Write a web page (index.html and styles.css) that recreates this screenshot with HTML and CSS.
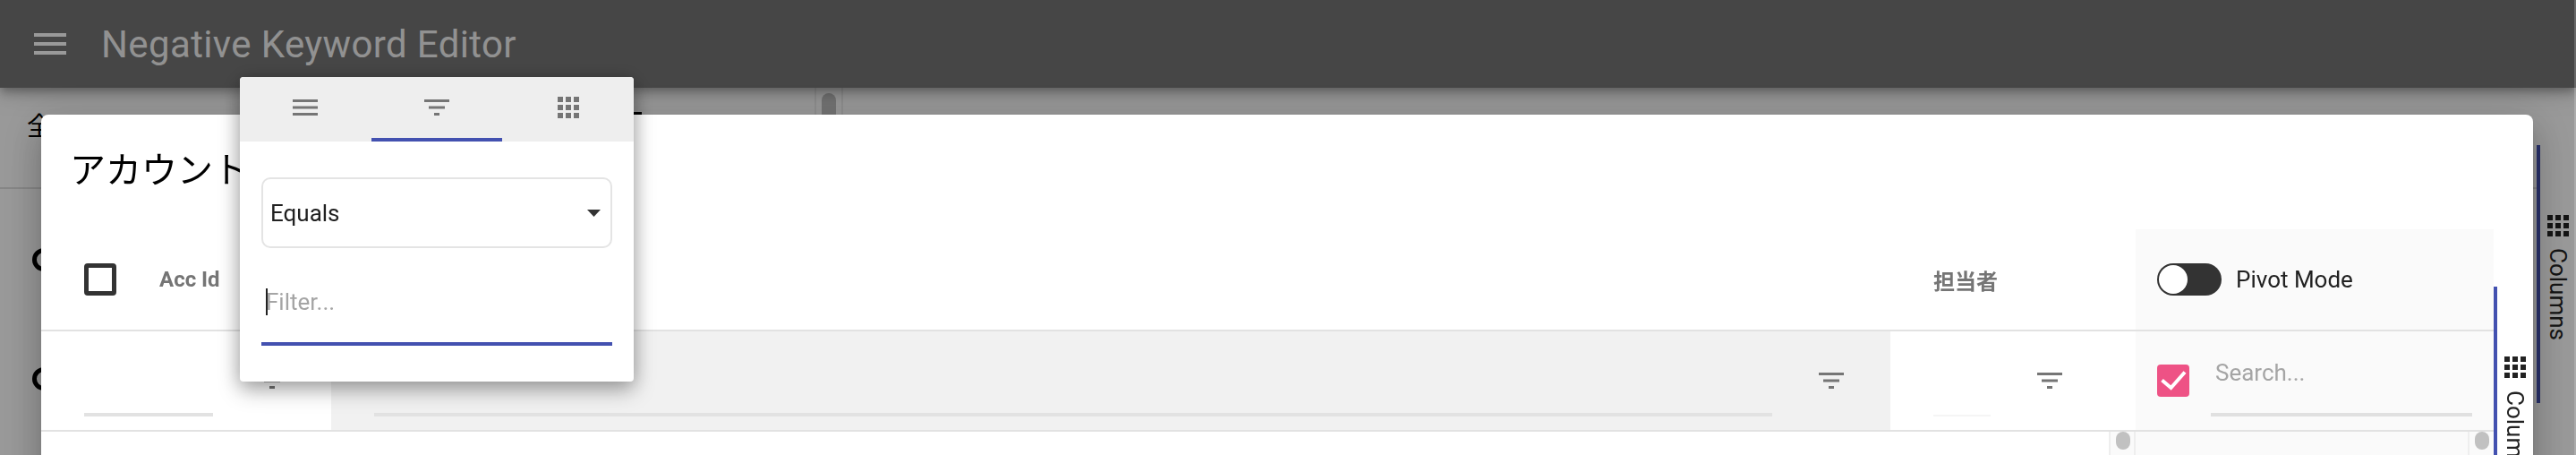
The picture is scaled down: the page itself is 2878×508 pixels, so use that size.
FILE: index.html
```html
<!DOCTYPE html>
<html lang="ja">
<head>
<meta charset="utf-8">
<title>Negative Keyword Editor</title>
<link rel="stylesheet" href="styles.css">
</head>
<body>
<div class="app">
  <header class="appbar">
    <svg class="icon-burger" viewBox="0 0 36 24"><path d="M0 0h36v4H0zM0 10h36v4H0zM0 20h36v4H0z"/></svg>
    <h1 class="app-title">Negative Keyword Editor</h1>
  </header>
  <div class="page">
    <main class="page-main">
      <div class="page-toolbar">
        <span class="page-label">全</span>
        <span class="page-peek"></span>
        <div class="page-scroller"><span class="page-thumb"></span></div>
      </div>
      <div class="page-row"><span class="page-radio"></span></div>
      <div class="page-row"><span class="page-radio"></span></div>
    </main>
    <aside class="side">
      <div class="side-tab side-tab-page">
        <svg class="icon-cols" viewBox="0 0 24 24"><path d="M0 0h6v6H0zM9 0h6v6H9zM18 0h6v6h-6zM0 9h6v6H0zM9 9h6v6H9zM18 9h6v6h-6zM0 18h6v6H0zM9 18h6v6H9zM18 18h6v6h-6z"/></svg>
        <span class="side-label">Columns</span>
      </div>
    </aside>
  </div>
</div>

<div class="backdrop"></div>
<div class="edge-strip"></div>

<section class="dialog">
  <h2 class="dialog-title">アカウント</h2>
  <div class="dialog-body">
    <div class="grid">
      <div class="row row-head">
        <div class="cell head-cell">
          <span class="check-empty"></span>
          <span class="col-name col-name-first">Acc Id</span>
        </div>
        <div class="cell"></div>
        <div class="cell head-cell"><span class="col-name">担当者</span></div>
        <div class="cell tool-cell head-tool">
          <span class="toggle"><span class="toggle-knob"></span></span>
          <span class="pivot-label">Pivot Mode</span>
        </div>
      </div>
      <div class="row row-filter">
        <div class="cell filter-cell">
          <span class="filter-input w-first"></span>
          <svg class="icon-filter" viewBox="0 0 28 18"><path d="M0 0h28v3H0zM5 7.500h18v3H5zM11 15h6v3h-6z"/></svg>
        </div>
        <div class="cell filter-cell cell-active">
          <span class="filter-input w-second"></span>
          <svg class="icon-filter" viewBox="0 0 28 18"><path d="M0 0h28v3H0zM5 7.500h18v3H5zM11 15h6v3h-6z"/></svg>
        </div>
        <div class="cell filter-cell">
          <span class="filter-input w-third"></span>
          <svg class="icon-filter" viewBox="0 0 28 18"><path d="M0 0h28v3H0zM5 7.500h18v3H5zM11 15h6v3h-6z"/></svg>
        </div>
        <div class="cell tool-cell filter-tool">
          <span class="check-on">
            <svg class="icon-check" viewBox="0 0 36 36"><path d="M5.500 17.500 15.500 26 31 8.500"/></svg>
          </span>
          <span class="search"><span class="search-text">Search...</span></span>
        </div>
      </div>
      <div class="row row-body">
        <div class="cell"></div>
        <div class="cell"></div>
        <div class="cell body-end"><div class="scroller"><span class="thumb"></span></div></div>
        <div class="cell tool-cell body-end"><div class="scroller scroller-tool"><span class="thumb"></span></div></div>
      </div>
    </div>
    <div class="dialog-side">
      <div class="side-tab side-tab-dialog">
        <svg class="icon-cols" viewBox="0 0 24 24"><path d="M0 0h6v6H0zM9 0h6v6H9zM18 0h6v6h-6zM0 9h6v6H0zM9 9h6v6H9zM18 9h6v6h-6zM0 18h6v6H0zM9 18h6v6H9zM18 18h6v6h-6z"/></svg>
        <span class="side-label">Columns</span>
      </div>
    </div>
  </div>
</section>

<div class="popup">
  <div class="tabs">
    <div class="tab">
      <svg class="icon-filter" viewBox="0 0 28 18"><path d="M0 0h28v3H0zM0 7.500h28v3H0zM0 15h28v3H0z"/></svg>
    </div>
    <div class="tab tab-active">
      <svg class="icon-filter" viewBox="0 0 28 18"><path d="M0 0h28v3H0zM5 7.500h18v3H5zM11 15h6v3h-6z"/></svg>
    </div>
    <div class="tab">
      <svg class="icon-tabcols" viewBox="0 0 24 24"><path d="M0 0h6v6H0zM9 0h6v6H9zM18 0h6v6h-6zM0 9h6v6H0zM9 9h6v6H9zM18 9h6v6h-6zM0 18h6v6H0zM9 18h6v6H9zM18 18h6v6h-6z"/></svg>
    </div>
  </div>
  <div class="popup-body">
    <div class="select">
      <span>Equals</span>
      <svg class="icon-caret" viewBox="0 0 15 8"><path d="M0 0h15L7.500 8z"/></svg>
    </div>
    <div class="popup-field">
      <span class="text-caret"></span>
      <span class="popup-placeholder">Filter...</span>
    </div>
  </div>
</div>
</body>
</html>
```
FILE: styles.css
```css
* { box-sizing: border-box; }
html, body { margin: 0; height: 508px; overflow: hidden; }
body {
  background: #fff;
  color: #000;
  font-family: Roboto, "Noto Sans CJK JP", sans-serif;
}

/* page behind the dialog */
.appbar {
  position: relative;
  z-index: 1;
  display: flex;
  align-items: center;
  height: 98px;
  padding-left: 38px;
  background: #757575;
  box-shadow: 0 4px 8px -2px rgba(0,0,0,.2), 0 8px 10px rgba(0,0,0,.14), 0 2px 30px rgba(0,0,0,.2);
}
.icon-burger { width: 36px; height: 24px; fill: #fff; }
.app-title {
  margin: 0 0 0 39px;
  font-size: 42px;
  font-weight: 400;
  letter-spacing: .37px;
  color: rgba(255,255,255,.92);
}
.page { display: flex; height: 410px; }
.page-main { flex: 1; }
.page-toolbar {
  display: flex;
  align-items: flex-start;
  height: 113px;
  padding-left: 30px;
  border-bottom: 2px solid #e0e0e0;
}
.page-label { margin-top: 24px; width: 30px; font-size: 28px; line-height: 40px; }
.page-peek { width: 9px; height: 4px; margin: 27px 0 0 648px; background: #000; }
.page-scroller {
  width: 32px;
  height: 60px;
  margin-left: 193px;
  padding: 6px 6px 0;
  border: solid #eee;
  border-width: 0 2px;
}
.page-thumb { display: block; height: 50px; border-radius: 8px; background: #c1c1c1; }
.page-row { display: flex; height: 133px; padding: 66px 0 0 36px; }
.page-radio { width: 26px; height: 26px; border: 5px solid #000; border-radius: 50%; }
.side { width: 44px; padding-top: 64px; }
.side-tab {
  display: flex;
  flex-direction: column;
  align-items: flex-start;
  border-left: 4px solid #4351b0;
  padding: 78px 0 0 8px;
}
.side-tab-page { height: 288px; }
.icon-cols { display: block; width: 24px; height: 24px; fill: #222; }
.side-label {
  margin-top: 13px;
  writing-mode: vertical-rl;
  font-size: 26px;
  line-height: 24px;
  color: #222;
}
.backdrop { position: fixed; inset: 0; z-index: 2; background: rgba(0,0,0,.4); }
.edge-strip {
  position: fixed;
  top: 0;
  right: 0;
  z-index: 2;
  width: 2px;
  height: 508px;
  background: rgba(255,255,255,.18);
}

/* dialog */
.dialog {
  position: fixed;
  top: 128px;
  left: 46px;
  z-index: 3;
  width: 2784px;
  height: 500px;
  border-radius: 8px;
  background: #fff;
  box-shadow: 0 11px 15px -7px rgba(0,0,0,.2), 0 24px 38px 3px rgba(0,0,0,.14), 0 9px 46px 8px rgba(0,0,0,.12);
}
.dialog-title {
  margin: 0;
  height: 128px;
  padding: 26px 0 0 32px;
  font-size: 40px;
  font-weight: 400;
  line-height: 66px;
  font-family: "Noto Sans CJK JP", sans-serif;
}
.dialog-body { display: flex; height: 372px; }
.grid { width: 2740px; }
.row {
  display: grid;
  grid-template-columns: 324px 1742px 274px 400px;
}
.row-head { height: 114px; border-bottom: 2px solid #e2e2e2; }
.row-filter { height: 112px; border-bottom: 2px solid #e2e2e2; }
.row-body { height: 146px; }
.cell { min-width: 0; }
.head-cell { display: flex; align-items: center; padding-left: 48px; }
.check-empty {
  width: 36px;
  height: 36px;
  border: 5px solid #333;
  border-radius: 4px;
}
.col-name { font-size: 24px; font-weight: 700; color: #757575; }
.col-name-first { margin-left: 48px; }
.tool-cell { background: #fafafa; }
.head-tool { display: flex; align-items: center; padding-left: 24px; }
.toggle {
  width: 72px;
  height: 36px;
  padding: 2px;
  border-radius: 18px;
  background: #333;
}
.toggle-knob { display: block; width: 32px; height: 32px; border-radius: 50%; background: #fff; }
.pivot-label { margin-left: 16px; font-size: 26px; color: #212121; }
.filter-cell { display: flex; align-items: center; padding-left: 48px; }
.cell-active { background: #f1f1f1; }
.filter-input { align-self: flex-start; height: 95px; margin-right: 52px; border-bottom: 4px solid #e2e2e2; }
.w-first { width: 144px; }
.w-second { width: 1562px; }
.w-third { width: 64px; border-bottom: 2px solid #f5f5f5; }
.icon-filter { display: block; width: 28px; height: 18px; fill: #757575; }
.filter-tool { display: flex; align-items: center; padding-left: 24px; }
.check-on { width: 36px; height: 36px; border-radius: 4px; background: #ee5285; }
.icon-check { display: block; width: 36px; height: 36px; fill: none; stroke: #fff; stroke-width: 4px; }
.search {
  align-self: flex-start;
  width: 292px;
  height: 95px;
  margin-left: 24px;
  padding: 31px 0 0 5px;
  border-bottom: 4px solid #e0e0e0;
}
.search-text { display: block; font-size: 26px; line-height: 30px; color: #a5a5a5; }
.body-end { display: flex; justify-content: flex-end; }
.scroller {
  width: 30px;
  height: 26px;
  padding-left: 6px;
  border-left: 2px solid #eee;
  border-right: 2px solid #eee;
  background: #fafafa;
}
.scroller-tool { width: 29px; border-right: 0; }
.thumb { display: block; width: 16px; height: 20px; border-radius: 8px; background: #c1c1c1; }
.dialog-side { width: 44px; padding-top: 64px; }
.side-tab-dialog { height: 308px; }
.side-tab-dialog .side-label { margin-top: 14px; }

/* column menu */
.popup {
  position: fixed;
  top: 86px;
  left: 268px;
  z-index: 4;
  width: 440px;
  height: 340px;
  border-radius: 4px;
  background: #fff;
  box-shadow: 0 10px 24px rgba(0,0,0,.28), 0 2px 20px rgba(0,0,0,.2);
}
.tabs { display: flex; height: 72px; border-radius: 4px 4px 0 0; background: #eee; }
.tab {
  flex: 1;
  display: flex;
  align-items: center;
  justify-content: center;
  border-bottom: 4px solid transparent;
}
.tab-active { border-bottom-color: #4351b0; }
.icon-tabcols { display: block; width: 24px; height: 24px; fill: #757575; }
.popup-body { padding: 40px 24px; }
.select {
  display: flex;
  align-items: center;
  justify-content: space-between;
  height: 79px;
  padding: 0 11px 0 8px;
  border: 2px solid #e4e4e4;
  border-radius: 10px;
  font-size: 26px;
  color: #212121;
}
.icon-caret { display: block; width: 15px; height: 8px; fill: #333; }
.popup-field {
  display: flex;
  height: 80px;
  margin-top: 29px;
  padding: 16px 0 0 5px;
  border-bottom: 4px solid #4351b0;
}
.text-caret { width: 2px; height: 30px; margin-right: -2px; background: #222; }
.popup-placeholder { font-size: 26px; line-height: 30px; color: #a5a5a5; }
```
